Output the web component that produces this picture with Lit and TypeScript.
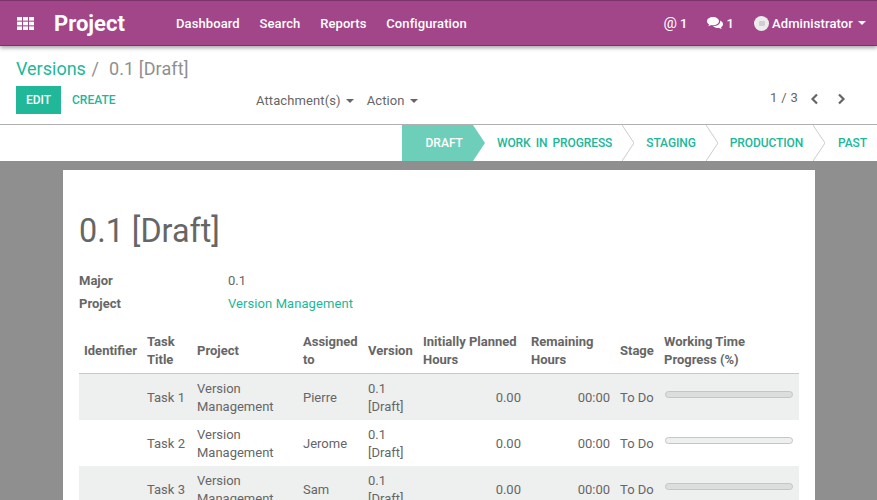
import { LitElement, html, css, svg } from "lit";
import { customElement } from "lit/decorators.js";

const rows = [
  { title: "Task 1", who: "Pierre" },
  { title: "Task 2", who: "Jerome" },
  { title: "Task 3", who: "Sam" },
];

const stages = ["DRAFT", "WORK IN PROGRESS", "STAGING", "PRODUCTION", "PAST"];

const gridIcon = svg`<svg class="grid" width="17" height="13" viewBox="0 0 17 13" fill="#fff">
  <rect width="5" height="3.6"/><rect x="6" width="5" height="3.6"/><rect x="12" width="5" height="3.6"/>
  <rect y="4.7" width="5" height="3.6"/><rect x="6" y="4.7" width="5" height="3.6"/><rect x="12" y="4.7" width="5" height="3.6"/>
  <rect y="9.4" width="5" height="3.6"/><rect x="6" y="9.4" width="5" height="3.6"/><rect x="12" y="9.4" width="5" height="3.6"/>
</svg>`;

const chatIcon = svg`<svg width="16" height="13" viewBox="0 0 16 13" fill="#fff">
  <path d="M6 0C2.7 0 0 1.9 0 4.2c0 1.3.8 2.4 2.1 3.2-.2.7-.6 1.3-1.1 1.8 1 0 2.2-.5 3-1.2.6.1 1.3.2 2 .2 3.3 0 6-1.8 6-4S9.300 0 6 0z"/>
  <path d="M13 3.600c.2.300.2.700.2 1 0 2.600-2.900 4.500-6.600 4.500h-.5C6.900 10.200 8.500 11 10.300 11c.6 0 1.100-.1 1.700-.2.700.6 1.800 1.200 3 1.200-.5-.5-.9-1.100-1.100-1.800C15.200 9.500 16 8.400 16 7.200c0-1.500-1.200-2.800-3-3.600z"/>
</svg>`;

@customElement("app-root")
export class AppRoot extends LitElement {
  static styles = css`
    :host {
      display: block;
      height: 500px;
      overflow: hidden;
      background: #8f8f8f;
      font-family: Roboto, "Liberation Sans", sans-serif;
      font-size: 13px;
      color: #666;
    }
    .navbar {
      position: relative;
      z-index: 2;
      display: flex;
      align-items: center;
      height: 46px;
      box-sizing: border-box;
      background: #a24689;
      border-top: 1px solid #7c3568;
      border-bottom: 1px solid #7c3568;
      box-shadow: 0 2px 4px rgba(0, 0, 0, 0.35);
      color: #fff;
      font-weight: 500;
      letter-spacing: 0.1px;
    }
    .grid {
      margin-left: 17px;
      flex: none;
    }
    .brand {
      margin-left: 20px;
      width: 122px;
      font-size: 22px;
      font-weight: 700;
      letter-spacing: 0;
    }
    .links {
      display: flex;
      gap: 19.7px;
    }
    .right {
      margin-left: auto;
      display: flex;
      align-items: center;
      padding-right: 11px;
    }
    .at {
      font-weight: 400;
      font-size: 15px;
      margin-right: 3px;
    }
    .count {
      margin-right: 20px;
    }
    .count.first {
      margin-right: 19px;
    }
    .chat {
      display: flex;
      margin-right: 4px;
    }
    .avatar {
      display: flex;
      align-items: center;
      justify-content: center;
      width: 15px;
      height: 15px;
      border-radius: 50%;
      background: #ececec;
      margin-right: 3px;
    }
    .avatar::after {
      content: "";
      width: 6px;
      height: 5px;
      border-radius: 1px;
      background: #cfcfcf;
    }
    .caret {
      display: inline-block;
      width: 0;
      height: 0;
      border-left: 4px solid transparent;
      border-right: 4px solid transparent;
      border-top: 4px solid currentColor;
      margin-left: 5px;
      vertical-align: middle;
    }
    .control {
      background: #fff;
      height: 79px;
      box-sizing: border-box;
      border-bottom: 1px solid #b0b0b0;
      padding: 11px 16px 0;
    }
    .crumbs {
      font-size: 18px;
      line-height: 24px;
      color: #8f8f8f;
      letter-spacing: 0.1px;
    }
    .crumbs a {
      color: #21b799;
      letter-spacing: 0;
    }
    .crumbs .sep {
      margin: 0 10px 0 1px;
    }
    .buttons {
      display: flex;
      align-items: center;
      margin-top: 5px;
      height: 28px;
    }
    .edit {
      background: #21b799;
      color: #fff;
      font-size: 12px;
      font-weight: 500;
      width: 45px;
      height: 28px;
      line-height: 28px;
      text-align: center;
    }
    .create {
      color: #21b799;
      font-size: 12px;
      font-weight: 500;
      margin-left: 11px;
      width: 184px;
    }
    .menu {
      margin-right: 13px;
      letter-spacing: 0.1px;
    }
    .pager {
      margin-left: auto;
      margin-bottom: 2px;
      display: flex;
      align-items: center;
      padding-right: 15px;
    }
    .pager svg {
      display: block;
    }
    .pager .nums {
      margin: 0 12px 4px 0;
      letter-spacing: 0.3px;
    }
    .pager svg + svg {
      margin-left: 18px;
    }
    .status {
      display: flex;
      justify-content: flex-end;
      height: 36px;
      background: #fff;
    }
    .stage {
      position: relative;
      padding: 0 10px 0 24px;
      line-height: 36px;
      font-size: 12px;
      font-weight: 500;
      color: #21b799;
      letter-spacing: -0.1px;
      word-spacing: 2.3px;
    }
    .stage:last-child {
      padding-left: 25px;
    }
    .stage.active {
      background: #6dcfb9;
      color: #fff;
      padding-left: 24px;
      letter-spacing: 0;
    }
    .stage svg {
      position: absolute;
      left: 100%;
      top: 0;
      z-index: 1;
    }
    .stage:last-child svg {
      display: none;
    }
    .sheet {
      background: #fff;
      width: 752px;
      height: 400px;
      box-sizing: border-box;
      margin: 9px 0 0 63px;
      padding: 40px 16px 0;
    }
    h1 {
      margin: 0;
      font-size: 32.3px;
      line-height: 42px;
      font-weight: 400;
      color: #666;
    }
    .fields {
      display: grid;
      grid-template-columns: 149px 1fr;
      row-gap: 5px;
      margin-top: 20px;
      line-height: 18px;
    }
    .fields b {
      font-weight: 700;
    }
    .fields a {
      color: #21b799;
      letter-spacing: 0.08px;
    }
    table {
      border-collapse: collapse;
      table-layout: fixed;
      width: 720px;
      margin-top: 12px;
      line-height: 18px;
    }
    th {
      text-align: left;
      font-weight: 700;
      padding: 8px 5px 4px;
      border-bottom: 1px solid #c8caca;
      vertical-align: middle;
    }
    td {
      padding: 6px 5px 4px;
      height: 36px;
      vertical-align: middle;
    }
    tbody tr:nth-child(odd) {
      background: #eeefef;
    }
    .num {
      text-align: right;
    }
    .bar {
      height: 5px;
      margin: 0 1px 8px;
      border: 1px solid #c4c6c6;
      border-radius: 4px;
      background: #dcdede;
    }
    tbody tr:nth-child(even) .bar {
      background: #eeefef;
    }
  `;

  render() {
    return html`
      <div class="navbar">
        ${gridIcon}
        <div class="brand">Project</div>
        <div class="links">
          <span>Dashboard</span><span>Search</span><span>Reports</span><span>Configuration</span>
        </div>
        <div class="right">
          <span class="at">@</span><span class="count first">1</span>
          <span class="chat">${chatIcon}</span><span class="count">1</span>
          <span class="avatar"></span>
          <span>Administrator</span><span class="caret"></span>
        </div>
      </div>
      <div class="control">
        <div class="crumbs"><a>Versions</a><span class="sep"> /</span>0.1 [Draft]</div>
        <div class="buttons">
          <div class="edit">EDIT</div>
          <div class="create">CREATE</div>
          <div class="menu">Attachment(s)<span class="caret"></span></div>
          <div class="menu">Action<span class="caret"></span></div>
          <div class="pager">
            <span class="nums">1 / 3</span>
            <svg width="9" height="12" viewBox="0 0 9 12" fill="none" stroke="#666" stroke-width="2.200"><path d="M7 1.500 2.500 6 7 10.500"/></svg>
            <svg width="9" height="12" viewBox="0 0 9 12" fill="none" stroke="#666" stroke-width="2.200"><path d="M2 1.500 6.500 6 2 10.500"/></svg>
          </div>
        </div>
      </div>
      <div class="status">
        ${stages.map(
          (s, i) => html`<div class="stage ${i === 0 ? "active" : ""}">
            ${s}
            ${i === 0
              ? svg`<svg width="12" height="36" viewBox="0 0 12 36"><path d="M0 0 12 18 0 36z" fill="#6dcfb9"/></svg>`
              : svg`<svg width="12" height="36" viewBox="0 0 12 36" fill="none" stroke="#ccc"><path d="M0 0 12 18 0 36"/></svg>`}
          </div>`
        )}
      </div>
      <div class="sheet">
        <h1>0.1 [Draft]</h1>
        <div class="fields">
          <b>Major</b><span>0.1</span>
          <b>Project</b><a>Version Management</a>
        </div>
        <table>
          <colgroup>
            <col style="width:63px" /><col style="width:50px" /><col style="width:106px" />
            <col style="width:65px" /><col style="width:55px" /><col style="width:108px" />
            <col style="width:89px" /><col style="width:44px" /><col style="width:140px" />
          </colgroup>
          <thead>
            <tr>
              <th>Identifier</th><th>Task Title</th><th>Project</th><th>Assigned to</th><th>Version</th>
              <th>Initially Planned Hours</th><th>Remaining Hours</th><th>Stage</th><th>Working Time Progress (%)</th>
            </tr>
          </thead>
          <tbody>
            ${rows.map(
              (r) => html`<tr>
                <td></td><td>${r.title}</td><td>Version Management</td><td>${r.who}</td><td>0.1 [Draft]</td>
                <td class="num">0.00</td><td class="num">00:00</td><td>To Do</td>
                <td><div class="bar"></div></td>
              </tr>`
            )}
          </tbody>
        </table>
      </div>
    `;
  }
}
